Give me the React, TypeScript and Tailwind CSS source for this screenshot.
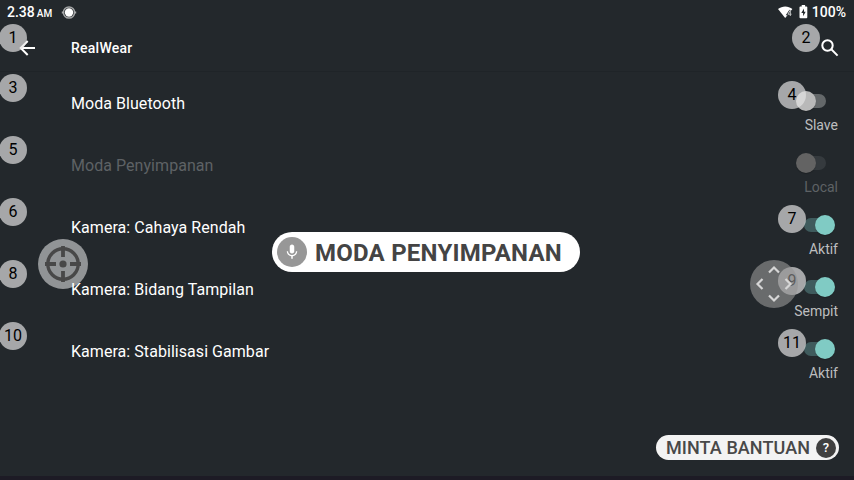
import React from 'react';

type SwitchState = 'off' | 'disabled' | 'on';

interface Row {
  label: string;
  value: string;
  left: string;
  right?: string;
  state: SwitchState;
}

const rows: Row[] = [
  { label: 'Moda Bluetooth', value: 'Slave', left: '3', right: '4', state: 'off' },
  { label: 'Moda Penyimpanan', value: 'Local', left: '5', state: 'disabled' },
  { label: 'Kamera: Cahaya Rendah', value: 'Aktif', left: '6', right: '7', state: 'on' },
  { label: 'Kamera: Bidang Tampilan', value: 'Sempit', left: '8', right: '9', state: 'on' },
  { label: 'Kamera: Stabilisasi Gambar', value: 'Aktif', left: '10', right: '11', state: 'on' },
];

function Badge({ text, className }: { text: string; className: string }) {
  return (
    <span
      className={`absolute flex h-7 w-7 items-center justify-center rounded-full bg-[#e4e4e4]/68 text-[16px] leading-none text-black ${className}`}
    >
      {text}
    </span>
  );
}

const track: Record<SwitchState, string> = {
  off: 'ml-[2.5px] bg-[#64686a]',
  disabled: 'ml-[2.5px] bg-[#353a3e]',
  on: 'ml-[8.5px] bg-[#3f5b5d]',
};
const thumb: Record<SwitchState, string> = {
  off: 'left-0 bg-[#b9b9b9]',
  disabled: 'left-0 bg-[#636363]',
  on: 'left-[19px] bg-[#80cbc4]',
};

function Toggle({ state }: { state: SwitchState }) {
  return (
    <span className="relative mr-[3.5px] flex h-5 w-[39px] items-center">
      <span className={`h-[14px] w-[28px] rounded-full ${track[state]}`} />
      <span className={`absolute top-0 h-5 w-5 rounded-full shadow-[0_1px_1px_rgba(0,0,0,0.2)] ${thumb[state]}`} />
    </span>
  );
}

function StatusBar() {
  return (
    <div className="flex h-6 items-center pl-[7px] pr-2 font-medium text-white">
      <span className="text-[14px] leading-none">2.38</span>
      <span className="ml-[2px] mt-[3px] text-[10px] leading-none">AM</span>
      <svg className="ml-[9px]" width="16" height="16" viewBox="0 0 16 16">
        <circle cx="8" cy="8.5" r="5.6" fill="none" stroke="#a3a5a6" strokeWidth="1.5" />
        <path d="M0.8 8.5h2M13.2 8.5h2" stroke="#a9abac" strokeWidth="1.8" />
        <circle cx="8" cy="8.5" r="4.2" fill="#fff" />
      </svg>
      <svg className="ml-auto" width="15" height="13" viewBox="0 0 15 13">
        <path d="M0 3C4.2-.4 10.2-.4 14.4 3L7.2 12Z" fill="#fff" />
        <path d="M12.3 4v6M12.3 4.2L9.6 8.3h3.8" fill="none" stroke="#23282c" strokeWidth="2" />
        <path d="M12.3 4v6M12.3 4.2L9.9 8.2h3.6" fill="none" stroke="#c5c7c8" strokeWidth="1" />
      </svg>
      <svg className="ml-[6px] mr-[4px] -mt-px" width="9" height="14" viewBox="0 0 9 14">
        <path d="M2.7 0h3.4v1.4h1.3q.9 0 .9.9v10q0 .9-.9.9H1.4q-.9 0-.9-.9v-10q0-.9.9-.9h1.3z" fill="#fff" />
        <path d="M5 3.5L2.3 8h1.8v3.2L6.7 6.8H5z" fill="#23282c" />
      </svg>
      <span className="text-[14px] leading-none">100%</span>
    </div>
  );
}

export default function App() {
  return (
    <main className="relative flex h-[480px] w-[854px] flex-col overflow-hidden bg-[#23282c] font-['Roboto',sans-serif] text-white">
      <StatusBar />
      <header className="relative flex h-12 items-center border-b border-[#1f2428] pl-[19px] pr-[15px]">
        <svg width="17" height="16" viewBox="0 0 17 16" fill="none" stroke="#fff" strokeWidth="2">
          <path d="M16 8H2M8.7 1L1.7 8l7 7" />
        </svg>
        <h1 className="ml-[35px] text-[14px] font-medium leading-none tracking-[0.25px]">RealWear</h1>
        <svg className="ml-auto" width="18" height="18" viewBox="0 0 18 18" fill="none" stroke="#fff" strokeWidth="2">
          <circle cx="6.5" cy="6.5" r="5.2" />
          <path d="M10.3 10.3l6.3 6.3" />
        </svg>
        <Badge text="1" className="-left-px top-0" />
        <Badge text="2" className="left-[792px] top-0" />
      </header>
      <ul className="flex flex-col pt-px">
        {rows.map((r) => (
          <li key={r.label} className="relative flex h-[62px] items-center justify-between pl-[71px] pr-4">
            <span className={`text-[16px] leading-5 tracking-[0.05px] ${r.state === 'disabled' ? 'text-[#5e6265]' : 'text-white'}`}>{r.label}</span>
            <span className="flex flex-col items-end pt-4">
              <Toggle state={r.state} />
              <span className={`mt-[6px] text-[14px] leading-4 ${r.state === 'disabled' ? 'text-[#5e6265]' : 'text-[#bdbebf]'}`}>{r.value}</span>
            </span>
            <Badge text={r.left} className="-left-px top-px" />
            {r.right && <Badge text={r.right} className="left-[778px] top-[8px]" />}
          </li>
        ))}
      </ul>
      <div className="mt-auto h-1 bg-[#1d1b25]" />

      <div className="absolute left-[38px] top-[239px] flex h-[50px] w-[50px] items-center justify-center rounded-full bg-white/50">
        <svg width="36" height="36" viewBox="0 0 36 36" fill="none" stroke="#484848">
          <circle cx="18" cy="18" r="15.2" strokeWidth="3.4" />
          <path d="M18 0v11M18 25v11M0 18h11M25 18h11" strokeWidth="3.8" />
          <circle cx="18" cy="18" r="3.6" fill="#484848" stroke="none" />
        </svg>
      </div>

      <div className="absolute left-[750px] top-[260px] flex h-12 w-12 items-center justify-center rounded-full bg-[#949494]/62">
        <svg width="48" height="48" viewBox="0 0 48 48" fill="none" stroke="#d6d6d6" strokeWidth="2.2">
          <path d="M19 12.5l5-5 5 5M19 35.5l5 5 5-5M12.5 19l-5 5 5 5M35.5 19l5 5-5 5" />
        </svg>
      </div>

      <div className="absolute left-[272px] top-[232px] flex h-10 w-[308px] items-center rounded-full bg-white pl-[5px]">
        <span className="flex h-[30px] w-[30px] items-center justify-center rounded-full bg-[#979797]">
          <svg width="18" height="18" viewBox="0 0 24 24" fill="#fff">
            <path d="M12 14c1.66 0 3-1.34 3-3V5c0-1.66-1.34-3-3-3S9 3.34 9 5v6c0 1.66 1.34 3 3 3zM17.3 11c0 3-2.54 5.1-5.3 5.1S6.7 14 6.7 11H5c0 3.41 2.72 6.23 6 6.72V21h2v-3.28c3.28-.48 6-3.3 6-6.72h-1.7z" />
          </svg>
        </span>
        <span className="ml-2 mt-[2px] whitespace-nowrap text-[24px] font-bold leading-none tracking-[0.23px] text-[#444]">MODA PENYIMPANAN</span>
      </div>

      <div className="absolute left-[656px] top-[435px] flex h-[25px] w-[183px] items-center rounded-full bg-[#f3f3f3] pl-[10px]">
        <span className="whitespace-nowrap text-[18px] font-medium leading-none tracking-[0.08px] text-[#484848]">MINTA BANTUAN</span>
        <span className="ml-auto mr-[3px] flex h-5 w-5 items-center justify-center rounded-full bg-[#404040] text-[13px] font-medium leading-none text-white">?</span>
      </div>
    </main>
  );
}
